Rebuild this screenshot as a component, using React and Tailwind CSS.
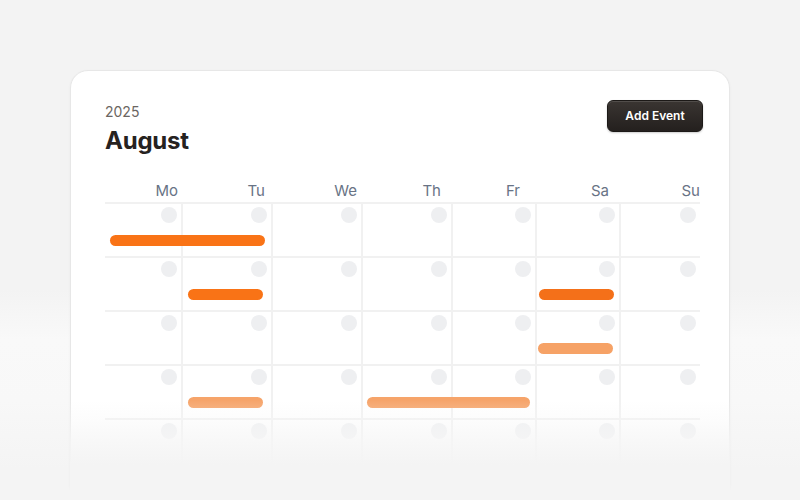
import React from 'react';

const days = ['Mo', 'Tu', 'We', 'Th', 'Fr', 'Sa', 'Su'];
const labelPad = ['pr-[5px]', 'pr-[8px]', 'pr-[6px]', 'pr-[12px]', 'pr-[17px]', 'pr-[12px]', 'pr-0'];

// events per week row
const weeks = [
  [{ col: 'col-start-1 col-span-2', m: 'ml-[5px] mr-[8px]', tone: 'bg-[#f97316]' }],
  [
    { col: 'col-start-2 col-span-1', m: 'ml-[5px] mr-[10px]', tone: 'bg-[#f97316]' },
    { col: 'col-start-6 col-span-1', m: 'ml-[2px] mr-[7px]', tone: 'bg-[#f47019]' },
  ],
  [{ col: 'col-start-6 col-span-1', m: 'ml-[1px] mr-[8px]', tone: 'bg-[#f6a266]' }],
  [
    { col: 'col-start-2 col-span-1', m: 'ml-[5px] mr-[10px]', tone: 'bg-[#f6a46a]' },
    { col: 'col-start-4 col-span-2', m: 'ml-[4px] mr-[7px]', tone: 'bg-[#f6a46a]' },
  ],
  [],
];

const cols = 'grid grid-cols-[78px_90px_90px_90px_84px_84px_79px] w-[595px]';

function Week({ bars }) {
  return (
    <div className={`${cols} border-t-2 border-[#f1f1f1] h-[54px]`}>
      {days.map((d, i) => (
        <div
          key={d}
          className={`row-start-1 flex justify-end pt-[3px] pr-[4px] ${i < 6 ? 'border-r-2 border-[#f1f1f1]' : ''}`}
          style={{ gridColumnStart: i + 1 }}
        >
          <span className="w-4 h-4 rounded-full bg-[#eeeff1]" />
        </div>
      ))}
      {bars.map((b, i) => (
        <div key={i} className={`row-start-1 ${b.col} self-start mt-[31px] h-[11px] rounded-full ${b.m} ${b.tone}`} />
      ))}
    </div>
  );
}

export default function App() {
  return (
    <div className="relative h-[500px] w-full overflow-hidden bg-[linear-gradient(to_bottom,#f3f3f3_0%,#f3f3f3_58%,#f9f9f9_68%,#f8f8f8_80%,#f4f4f4_94%)] pt-[70px] pl-[70px] font-['Inter',sans-serif]">
      <div className="relative w-[660px] h-[430px] bg-white rounded-[18px] border border-[#e7e7e7] shadow-[0_1px_3px_rgba(0,0,0,0.04)] pt-[29px] pl-[34px] pr-[26px]">
        <div className="flex items-start justify-between">
          <div className="pt-[2px]">
            <div className="text-sm leading-5 text-[#6b6662]">2025</div>
            <div className="mt-[3px] text-[24px] leading-8 font-bold tracking-[-0.01em] text-[#26221f]">August</div>
          </div>
          <button className="w-[96px] h-8 rounded-[6px] bg-linear-to-b from-[#3a3532] to-[#24201e] border border-[#1c1917] shadow-[inset_0_1px_0_rgba(255,255,255,0.12),0_1px_2px_rgba(0,0,0,0.2)] text-[12px] font-semibold text-white">
            Add Event
          </button>
        </div>

        <div className={`${cols} mt-[22px] h-6`}>
          {days.map((d, i) => (
            <div key={d} className={`flex justify-end ${labelPad[i]}`}>
              <span className="text-[15px] leading-6 text-[#687385] whitespace-nowrap">{d}</span>
            </div>
          ))}
        </div>

        <div className="-mt-px">
          {weeks.map((bars, i) => (
            <Week key={i} bars={bars} />
          ))}
        </div>

        <div className="absolute -left-px -right-px -bottom-px h-[100px] bg-[linear-gradient(to_bottom,rgba(248,248,248,0)_0%,rgba(247,247,247,0.35)_20%,rgba(246,246,246,0.8)_42%,#f4f4f4_65%)]" />
      </div>
    </div>
  );
}
